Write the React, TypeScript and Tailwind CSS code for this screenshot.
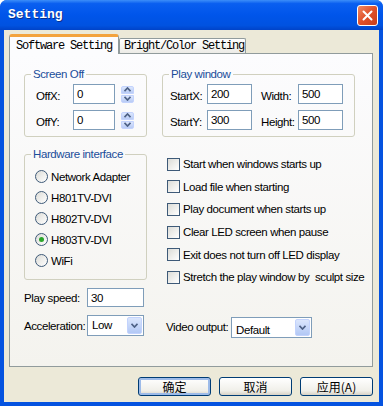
import React from "react";

const sans = "font-['Liberation_Sans',Arial,sans-serif] text-[11.5px] tracking-[-0.4px] leading-[14px] text-black";

const Field = ({ value, className }: { value: string; className: string }) => (
  <div className={`flex shrink-0 items-start border border-[#7f9db9] bg-white pl-[3px] pt-[2px] ${className}`}>{value}</div>
);

const Chevron = ({ up }: { up?: boolean }) => (
  <svg width="7" height="5" viewBox="0 0 7 5">
    <path d={up ? "M0.5 4.2 L3.5 1 L6.5 4.2" : "M0.5 0.8 L3.5 4 L6.5 0.8"} stroke="#4d6185" strokeWidth="1.7" fill="none" />
  </svg>
);

const Spin = () => (
  <div className="ml-[6px] flex h-[17px] w-[13px] shrink-0 flex-col">
    <div className="flex h-[8px] items-center justify-center rounded-t-[2px] border border-[#c3d3fd] bg-[linear-gradient(180deg,#dbe6fd,#b8cbf5)]">
      <Chevron up />
    </div>
    <div className="mt-[1px] flex h-[8px] items-center justify-center rounded-b-[2px] border border-[#c3d3fd] bg-[linear-gradient(180deg,#dbe6fd,#b8cbf5)]">
      <Chevron />
    </div>
  </div>
);

const Drop = ({ value, className, textClass }: { value: string; className: string; textClass: string }) => (
  <div className={`flex shrink-0 items-stretch border border-[#7f9db9] bg-white p-[1px] ${className}`}>
    <span className={`flex-1 pl-[3px] ${textClass}`}>{value}</span>
    <span className="flex w-[15px] items-center justify-center rounded-[2px] border border-[#c3d3fd] bg-[linear-gradient(180deg,#dbe6fd,#b2c8f5)]">
      <Chevron />
    </span>
  </div>
);

const Radio = ({ label, on }: { label: string; on?: boolean }) => (
  <div className="flex h-[21px] items-center whitespace-nowrap">
    <span className="flex h-[13px] w-[13px] shrink-0 items-center justify-center rounded-full border border-[#3e5a78] bg-[linear-gradient(135deg,#dcdcd7,#ffffff)]">
      {on && <span className="h-[5px] w-[5px] rounded-full bg-[#2aa52a]" />}
    </span>
    <span className="ml-[3px]">{label}</span>
  </div>
);

const Check = ({ label }: { label: string }) => (
  <div className="flex h-[22.6px] items-center pl-[5px]">
    <span className="h-[13px] w-[13px] shrink-0 border border-[#3e5a78] bg-[linear-gradient(135deg,#dcdcd7,#ffffff)]" />
    <span className="ml-[3px] whitespace-pre">{label}</span>
  </div>
);

const Group = ({ title, className, children }: { title: string; className: string; children: React.ReactNode }) => (
  <fieldset className={`rounded-[3px] border border-[#d0d0bf] p-0 ${className}`}>
    <legend className="ml-[6px] px-[2px] leading-[14px] text-[#1a4d9a]">{title}</legend>
    {children}
  </fieldset>
);

const Btn = ({ label, def }: { label: string; def?: boolean }) => (
  <div
    className={`flex h-[19px] w-[73px] items-center justify-center rounded-[3px] border border-[#003c74] bg-[linear-gradient(180deg,#ffffff,#f0efe9_75%,#d8d2c6)] font-['Noto_Sans_CJK_SC',sans-serif] text-[12px] leading-[14px] tracking-normal ${
      def ? "shadow-[inset_0_0_0_2px_#9dbbe9]" : ""
    }`}
  >
    {label}
  </div>
);

export default function App() {
  return (
    <div className="flex h-[406px] w-[383px] flex-col rounded-t-[7px] bg-[#0553e0]">
      <div className="flex h-[30px] items-center justify-between rounded-t-[7px] bg-[linear-gradient(180deg,#3c8ef9_0%,#0a5ff0_12%,#0055ea_50%,#0052e0_85%,#0043c8_100%)] pl-[8px] pr-[5px]">
        <span className="font-['Liberation_Mono',monospace] text-[13px] font-bold text-white [text-shadow:1px_1px_0_#0b2f8a]">Setting</span>
        <div className="flex h-[21px] w-[21px] items-center justify-center rounded-[3px] border border-white bg-[linear-gradient(135deg,#f08a63,#e0502a_50%,#c93e1a)]">
          <svg width="11" height="11" viewBox="0 0 11 11">
            <path d="M1.5 1.5 L9.5 9.5 M9.5 1.5 L1.5 9.5" stroke="white" strokeWidth="2" strokeLinecap="round" />
          </svg>
        </div>
      </div>

      <div className={`mx-[4px] mb-[4px] flex flex-1 flex-col bg-[#ece9d8] pt-[4px] ${sans}`}>
        <div className="ml-[5px] flex h-[19px] items-end font-['Liberation_Mono',monospace] text-[12px] tracking-[-1.2px]">
          <div className="relative z-10 mb-[-1px] h-[20px] w-[110px] rounded-t-[3px] border-x border-[#919b9c] border-t-[3px] border-t-[#f3a33e] bg-[#fcfcfe] pl-[6px] pt-[2px] leading-[14px]">
            Software Setting
          </div>
          <div className="h-[15px] w-[127px] rounded-t-[2px] border border-b-0 border-[#919b9c] bg-[linear-gradient(180deg,#ffffff,#ecebe6)] pl-[4px] leading-[14px]">
            Bright/Color Setting
          </div>
        </div>

        <div className="ml-[5px] flex h-[314px] w-[364px] gap-[15px] border border-[#919b9c] bg-[linear-gradient(180deg,#fcfcfe,#f4f3ee)] pl-[14px] pt-[13px]">
          <div className="flex w-[123px] shrink-0 flex-col">
            <Group title="Screen Off" className="w-[123px]">
              <div className="flex flex-col gap-[6px] pb-[6px] pl-[11px] pt-[3px]">
                <div className="flex h-[20px] items-center">
                  <span className="w-[37px] shrink-0 pt-[4px]">OffX:</span>
                  <Field value="0" className="h-[20px] w-[42px]" />
                  <Spin />
                </div>
                <div className="flex h-[20px] items-center">
                  <span className="w-[37px] shrink-0 pt-[4px]">OffY:</span>
                  <Field value="0" className="h-[20px] w-[42px]" />
                  <Spin />
                </div>
              </div>
            </Group>

            <Group title="Hardware interface" className="mt-[10px] w-[123px]">
              <div className="flex flex-col pb-[8px] pl-[10px] pt-[5px]">
                <Radio label="Network Adapter" />
                <Radio label="H801TV-DVI" />
                <Radio label="H802TV-DVI" />
                <Radio label="H803TV-DVI" on />
                <Radio label="WiFi" />
              </div>
            </Group>

            <div className="mt-[8px] flex h-[19px] items-center whitespace-nowrap">
              <span className="w-[63px] shrink-0">Play speed:</span>
              <Field value="30" className="h-[19px] w-[57px]" />
            </div>
            <div className="mt-[8px] flex h-[21px] items-center whitespace-nowrap">
              <span className="w-[63px] shrink-0">Acceleration:</span>
              <Drop value="Low" className="h-[21px] w-[57px]" textClass="pt-[1px]" />
            </div>
          </div>

          <div className="flex w-[193px] shrink-0 flex-col">
            <Group title="Play window" className="w-[193px]">
              <div className="flex flex-col gap-[6px] pb-[6px] pl-[7px] pt-[3px]">
                <div className="flex h-[20px] items-center">
                  <span className="w-[37px] shrink-0 pt-[4px]">StartX:</span>
                  <Field value="200" className="h-[20px] w-[45px]" />
                  <span className="ml-[9px] w-[37px] shrink-0 pt-[4px]">Width:</span>
                  <Field value="500" className="h-[20px] w-[45px]" />
                </div>
                <div className="flex h-[20px] items-center">
                  <span className="w-[37px] shrink-0 pt-[4px]">StartY:</span>
                  <Field value="300" className="h-[20px] w-[45px]" />
                  <span className="ml-[9px] w-[37px] shrink-0 pt-[4px]">Height:</span>
                  <Field value="500" className="h-[20px] w-[45px]" />
                </div>
              </div>
            </Group>

            <div className="mt-[16px] flex flex-col">
              <Check label="Start when windows starts up" />
              <Check label="Load file when starting" />
              <Check label="Play document when starts up" />
              <Check label="Clear LED screen when pause" />
              <Check label="Exit does not turn off LED display" />
              <Check label="Stretch the play window by  sculpt size" />
            </div>

            <div className="mt-[28px] flex h-[21px] items-center whitespace-nowrap pl-[4px]">
              <span className="w-[65px] shrink-0">Video output:</span>
              <Drop value="Default" className="h-[21px] w-[81px]" textClass="pt-[4px]" />
            </div>
          </div>
        </div>

        <div className="mt-[10px] flex justify-end gap-[8px] pr-[6px]">
          <Btn label="确定" def />
          <Btn label="取消" />
          <Btn label="应用(A)" />
        </div>
      </div>
    </div>
  );
}
